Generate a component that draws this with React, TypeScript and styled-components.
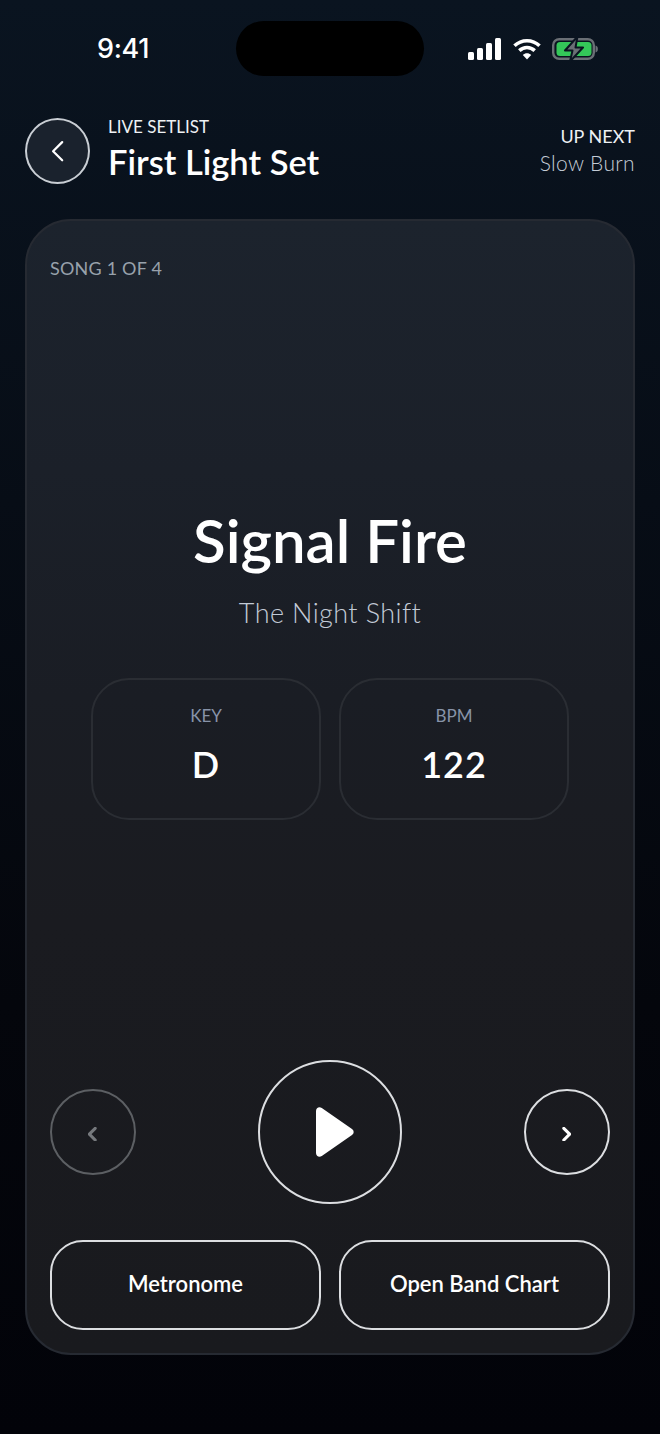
import styled, { createGlobalStyle } from "styled-components";

const GlobalStyle = createGlobalStyle`
  html, body {
    margin: 0;
    padding: 0;
    background: #03050a;
  }
  * {
    box-sizing: border-box;
  }
`;

const Screen = styled.div`
  width: 660px;
  height: 1434px;
  overflow: hidden;
  background: linear-gradient(180deg, #0a1420 0%, #070d16 35%, #04060c 70%, #020309 100%);
  color: #fff;
  font-family: "Lato", "Open Sans", sans-serif;
`;

const StatusBar = styled.div`
  height: 97px;
  padding: 21px 0 0 97px;
  display: flex;
  align-items: flex-start;
`;

const Clock = styled.span`
  width: 139px;
  margin-top: 11px;
  font-family: "Inter", sans-serif;
  font-size: 27px;
  line-height: 34px;
  font-weight: 500;
  letter-spacing: -0.3px;
`;

const Island = styled.div`
  width: 188px;
  height: 55px;
  border-radius: 28px;
  background: #000;
`;

const StatusIcons = styled.div`
  display: flex;
  align-items: center;
  gap: 11px;
  margin: 15px 0 0 44px;
`;

const Header = styled.header`
  height: 122px;
  padding: 21px 25px 0;
  display: flex;
  align-items: flex-start;
  justify-content: space-between;
`;

const HeaderLeft = styled.div`
  display: flex;
  align-items: flex-start;
  gap: 18px;
`;

const BackButton = styled.button`
  width: 65px;
  height: 66px;
  padding: 0;
  border-radius: 50%;
  border: 2px solid #c9ced4;
  background: #1a222d;
  display: flex;
  align-items: center;
  justify-content: center;
`;

const TitleBlock = styled.div`
  margin-top: -2px;
`;

const Eyebrow = styled.div`
  font-size: 17px;
  line-height: 22px;
  font-weight: 400;
  color: #eef1f4;
`;

const SetTitle = styled.h1`
  margin: 4px 0 0;
  font-size: 34.5px;
  line-height: 40px;
  font-weight: 600;
`;

const UpNext = styled.div`
  margin-top: 7px;
  text-align: right;
`;

const UpNextName = styled.div`
  margin-top: 3px;
  font-size: 21px;
  line-height: 26px;
  font-weight: 300;
  color: #c4ccd6;
  letter-spacing: 0.35px;
`;

const UpNextLabel = styled(Eyebrow)`
  font-size: 18px;
`;

const Card = styled.main`
  margin: 0 25px;
  height: 1136px;
  padding: 36px 23px 23px;
  border-radius: 46px;
  border: 2px solid #262a32;
  background: linear-gradient(180deg, #1c232d 0%, #1b2029 22%, #1a1d24 42%, #1a1b20 62%, #191a1e 100%);
  display: flex;
  flex-direction: column;
`;

const SongCount = styled.div`
  font-size: 18px;
  line-height: 22px;
  color: #98a1ab;
  letter-spacing: 0.2px;
`;

const SongInfo = styled.section`
  margin-top: 227px;
  display: flex;
  flex-direction: column;
  align-items: center;
`;

const SongTitle = styled.h2`
  margin: 0;
  font-size: 60px;
  line-height: 68px;
  font-weight: 600;
`;

const Artist = styled.div`
  margin-top: 22px;
  font-size: 27px;
  line-height: 34px;
  font-weight: 300;
  color: #c2cad6;
  letter-spacing: 0.4px;
`;

const Stats = styled.div`
  margin-top: 48px;
  display: flex;
  gap: 18px;
`;

const Stat = styled.div`
  width: 230px;
  height: 142px;
  padding-top: 25px;
  border-radius: 38px;
  border: 2px solid #2a2d33;
  text-align: center;
`;

const StatLabel = styled.div`
  font-size: 17px;
  line-height: 22px;
  color: #8793a8;
`;

const StatValue = styled.div`
  margin-top: 15px;
  font-size: 36px;
  line-height: 44px;
  font-weight: 600;
  letter-spacing: 1px;
`;

const Transport = styled.div`
  margin-top: auto;
  display: flex;
  align-items: center;
  justify-content: space-between;
`;

const RoundButton = styled.button<{ $size: number; $dim?: boolean }>`
  width: ${(p) => p.$size}px;
  height: ${(p) => p.$size}px;
  padding: 0;
  border-radius: 50%;
  border: 2px solid ${(p) => (p.$dim ? "#5c5f63" : "#dcdee1")};
  background: transparent;
  display: flex;
  align-items: center;
  justify-content: center;
`;

const Actions = styled.div`
  margin-top: 36px;
  display: flex;
  gap: 18px;
`;

const ActionButton = styled.button`
  flex: 1;
  height: 90px;
  padding: 0 0 4px;
  border-radius: 33px;
  border: 2px solid #dcdee1;
  background: transparent;
  color: #fff;
  font-family: inherit;
  font-size: 22px;
  font-weight: 600;
`;

const NudgedChevron = styled.span<{ $left?: boolean }>`
  display: flex;
  margin-top: 4px;
  margin-right: ${(p) => (p.$left ? 1 : 2)}px;
`;

const PlayNudge = styled.span`
  display: flex;
  margin-left: 9px;
`;

function SignalIcon() {
  return (
    <svg width="34" height="22" viewBox="0 0 34 22" fill="#fff">
      <rect x="0" y="14" width="6" height="8" rx="1.5" />
      <rect x="9" y="10" width="6" height="12" rx="1.5" />
      <rect x="18" y="5" width="6" height="17" rx="1.5" />
      <rect x="27" y="0" width="6" height="22" rx="1.5" />
    </svg>
  );
}

function WifiIcon() {
  return (
    <svg width="28" height="22" viewBox="0 0 28 22" fill="none" stroke="#fff" strokeWidth="3.6">
      <path d="M1.5 7.8C8.5 1 19.5 1 26.5 7.8" />
      <path d="M6.3 12.6C10.8 8.4 17.2 8.4 21.7 12.6" />
      <path d="M14 21.5L9.8 17C12.2 14.8 15.8 14.8 18.2 17Z" fill="#fff" stroke="none" />
    </svg>
  );
}

function BatteryIcon() {
  return (
    <svg width="46" height="26" viewBox="0 0 46 26" fill="none">
      <rect x="1.2" y="3.2" width="40.6" height="19.6" rx="6" stroke="#6a6f75" strokeWidth="2.4" />
      <rect x="4.5" y="6" width="35" height="14" rx="3.5" fill="#34c759" />
      <path d="M43.5 9.500c1.600.4 2.400 1.800 2.400 3.500s-.8 3.100-2.400 3.500z" fill="#6a6f75" />
      <path
        d="M25.500 0.500L13 14.500H20.500L18 25.500L31 11.500H23.500Z"
        fill="#6a6f75"
        stroke="#0a1420"
        strokeWidth="2"
        strokeLinejoin="round"
      />
    </svg>
  );
}

function Chevron({ left, color, width, size }: { left?: boolean; color: string; width: number; size: number }) {
  return (
    <svg width={size} height={size * 1.6} viewBox="0 0 10 16" fill="none">
      <path
        d={left ? "M8 1.500L1.500 8l6.500 6.500" : "M2 1.500L8.500 8 2 14.500"}
        stroke={color}
        strokeWidth={width}
        strokeLinecap="round"
        strokeLinejoin="round"
      />
    </svg>
  );
}

function PlayIcon() {
  return (
    <svg width="38" height="50" viewBox="0 0 38 50" fill="#fff">
      <path d="M0 4C0 .8 3.200-.9 5.800 1L36 22c2.200 1.500 2.200 4.500 0 6L5.800 49C3.200 50.900 0 49.200 0 46Z" />
    </svg>
  );
}

export default function App() {
  return (
    <>
      <GlobalStyle />
      <Screen>
        <StatusBar>
          <Clock>9:41</Clock>
          <Island />
          <StatusIcons>
            <SignalIcon />
            <WifiIcon />
            <BatteryIcon />
          </StatusIcons>
        </StatusBar>

        <Header>
          <HeaderLeft>
            <BackButton>
              <Chevron left color="#fff" width={1.6} size={14} />
            </BackButton>
            <TitleBlock>
              <Eyebrow>LIVE SETLIST</Eyebrow>
              <SetTitle>First Light Set</SetTitle>
            </TitleBlock>
          </HeaderLeft>
          <UpNext>
            <UpNextLabel>UP NEXT</UpNextLabel>
            <UpNextName>Slow Burn</UpNextName>
          </UpNext>
        </Header>

        <Card>
          <SongCount>SONG 1 OF 4</SongCount>
          <SongInfo>
            <SongTitle>Signal Fire</SongTitle>
            <Artist>The Night Shift</Artist>
            <Stats>
              <Stat>
                <StatLabel>KEY</StatLabel>
                <StatValue>D</StatValue>
              </Stat>
              <Stat>
                <StatLabel>BPM</StatLabel>
                <StatValue>122</StatValue>
              </Stat>
            </Stats>
          </SongInfo>

          <Transport>
            <RoundButton $size={86} $dim>
              <NudgedChevron $left>
                <Chevron left color="#76797d" width={3.4} size={9} />
              </NudgedChevron>
            </RoundButton>
            <RoundButton $size={144}>
              <PlayNudge>
                <PlayIcon />
              </PlayNudge>
            </RoundButton>
            <RoundButton $size={86}>
              <NudgedChevron>
                <Chevron color="#fff" width={3.4} size={9} />
              </NudgedChevron>
            </RoundButton>
          </Transport>

          <Actions>
            <ActionButton>Metronome</ActionButton>
            <ActionButton>Open Band Chart</ActionButton>
          </Actions>
        </Card>
      </Screen>
    </>
  );
}
